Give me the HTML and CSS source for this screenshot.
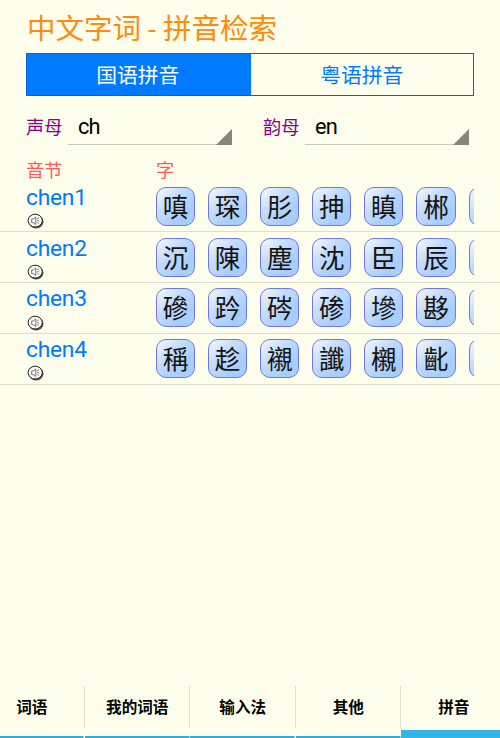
FILE: index.html
```html
<!DOCTYPE html>
<html lang="zh-CN">
<head>
<meta charset="utf-8">
<title>中文字词 - 拼音检索</title>
<link rel="stylesheet" href="styles.css">
</head>
<body>
<svg class="defs" aria-hidden="true">
  <symbol id="speaker" viewBox="0 0 17 16">
    <ellipse cx="9.1" cy="8.8" rx="7.4" ry="6.8" fill="#222" opacity=".8"/>
    <ellipse cx="8.2" cy="7.6" rx="7.1" ry="6.4" fill="#f6f6f6" stroke="#222" stroke-width="1"/>
    <path d="M4.7 6h1.7l2.4-2v7.4L6.4 9.6H4.7z" fill="#fff" stroke="#555" stroke-width=".8"/>
    <path d="M10.3 5.6l1.5-.7M10.3 7.7h1.8M10.3 9.6l1.5.7" stroke="#555" stroke-width=".8"/>
  </symbol>
</svg>
<div class="app">
  <main class="content">
    <h1 class="title">中文字词 - 拼音检索</h1>
    <div class="segments">
      <div class="segment active">国语拼音</div>
      <div class="segment">粤语拼音</div>
    </div>
    <div class="filters">
      <label class="label">声母</label>
      <div class="spinner">ch</div>
      <label class="label second">韵母</label>
      <div class="spinner">en</div>
    </div>
    <div class="heads"><span>音节</span><span>字</span></div>
  </main>
  <section class="rows">
    <div class="row">
      <div class="syllable"><span>chen1</span><svg class="sound"><use href="#speaker"/></svg></div>
      <div class="tiles"><b>嗔</b><b>琛</b><b>肜</b><b>抻</b><b>瞋</b><b>郴</b><b></b></div>
    </div>
    <div class="row">
      <div class="syllable"><span>chen2</span><svg class="sound"><use href="#speaker"/></svg></div>
      <div class="tiles"><b>沉</b><b>陳</b><b>塵</b><b>沈</b><b>臣</b><b>辰</b><b></b></div>
    </div>
    <div class="row">
      <div class="syllable"><span>chen3</span><svg class="sound"><use href="#speaker"/></svg></div>
      <div class="tiles"><b>磣</b><b>趻</b><b>硶</b><b>碜</b><b>墋</b><b>夦</b><b></b></div>
    </div>
    <div class="row">
      <div class="syllable"><span>chen4</span><svg class="sound"><use href="#speaker"/></svg></div>
      <div class="tiles"><b>稱</b><b>趁</b><b>襯</b><b>讖</b><b>櫬</b><b>齔</b><b></b></div>
    </div>
  </section>
  <nav class="tabs">
    <div class="tab">词语</div>
    <div class="tab">我的词语</div>
    <div class="tab">输入法</div>
    <div class="tab">其他</div>
    <div class="tab current">拼音</div>
  </nav>
</div>
</body>
</html>
```
FILE: styles.css
```css
* { box-sizing: border-box; }
body {
  margin: 0;
  background: #fdffec;
  font-family: Roboto, "Noto Sans CJK SC", sans-serif;
  font-weight: 400;
  color: #000;
}
.defs { position: absolute; width: 0; height: 0; }
.app {
  height: 738px;
  display: flex;
  flex-direction: column;
  overflow: hidden;
}
.content { padding: 0 26px; }
.title {
  margin: 0;
  height: 53px;
  padding: 10px 0 0 1px;
  font-size: 28.5px;
  font-weight: 400;
  line-height: 40px;
  color: #ff8a0c;
  white-space: nowrap;
}
.segments {
  display: flex;
  height: 43px;
  border: 1px solid #0a5be8;
}
.segment {
  width: 223px;
  font-size: 20.8px;
  line-height: 44px;
  text-align: center;
  color: #007aff;
}
.segment.active { width: 224px; padding-right: 2px; background: #007aff; color: #fdffec; }
.filters {
  display: flex;
  height: 50px;
  padding-top: 12px;
}
.label {
  width: 42px;
  font-size: 18.2px;
  line-height: 40px;
  color: #86008a;
  white-space: nowrap;
}
.label.second { margin-left: 31px; }
.spinner {
  position: relative;
  width: 164px;
  height: 37px;
  padding-left: 10px;
  border-bottom: 1px solid #c6c8ba;
  font-size: 21.8px;
  letter-spacing: -0.9px;
  line-height: 38px;
}
.spinner::after {
  content: "";
  position: absolute;
  right: 0;
  bottom: -1px;
  width: 16px;
  height: 16px;
  background: #868779;
  clip-path: polygon(100% 0, 100% 100%, 0 100%);
}
.heads {
  display: grid;
  grid-template-columns: 130px 1fr;
  height: 35.5px;
  font-size: 18.2px;
  line-height: 49px;
  color: #ff5a5a;
}
.rows { flex: 1; }
.row {
  display: flex;
  height: 50.8px;
  padding: 5.4px 26px 0;
  border-bottom: 1px solid #dcdecf;
}
.syllable {
  width: 130px;
  font-size: 22.8px;
  letter-spacing: -0.25px;
  line-height: 26px;
  color: #007aff;
}
.syllable span { display: block; margin-top: -2px; }
.sound { display: block; width: 17px; height: 16px; margin: 2.2px 0 0 1px; }
.tiles {
  flex: 1;
  display: flex;
  gap: 13px;
  overflow: hidden;
}
.tiles b {
  flex: none;
  width: 39.1px;
  height: 39px;
  border: 1.3px solid #7375e2;
  border-radius: 10px;
  background: linear-gradient(135deg, #f6faff 0%, #c3dcff 38%, #a6cdff 75%, #abd0ff 100%);
  font-size: 25.6px;
  font-weight: 400;
  line-height: 40px;
  text-align: center;
  color: #16130c;
}
.tabs {
  display: flex;
  height: 52px;
  margin-left: -21px;
}
.tab {
  flex: none;
  width: 105.5px;
  height: 52px;
  font-size: 15.6px;
  font-weight: 700;
  line-height: 44px;
  text-align: center;
  background:
    linear-gradient(#dfe1d2, #dfe1d2) right 0 top 0 / 1px 42px no-repeat,
    linear-gradient(#33addb, #33addb) left 0 bottom 0 / 104.5px 2px no-repeat;
}
.tab.current {
  background: linear-gradient(#33b5e5, #33b5e5) left 0 bottom 0 / 100% 8px no-repeat;
}
```
